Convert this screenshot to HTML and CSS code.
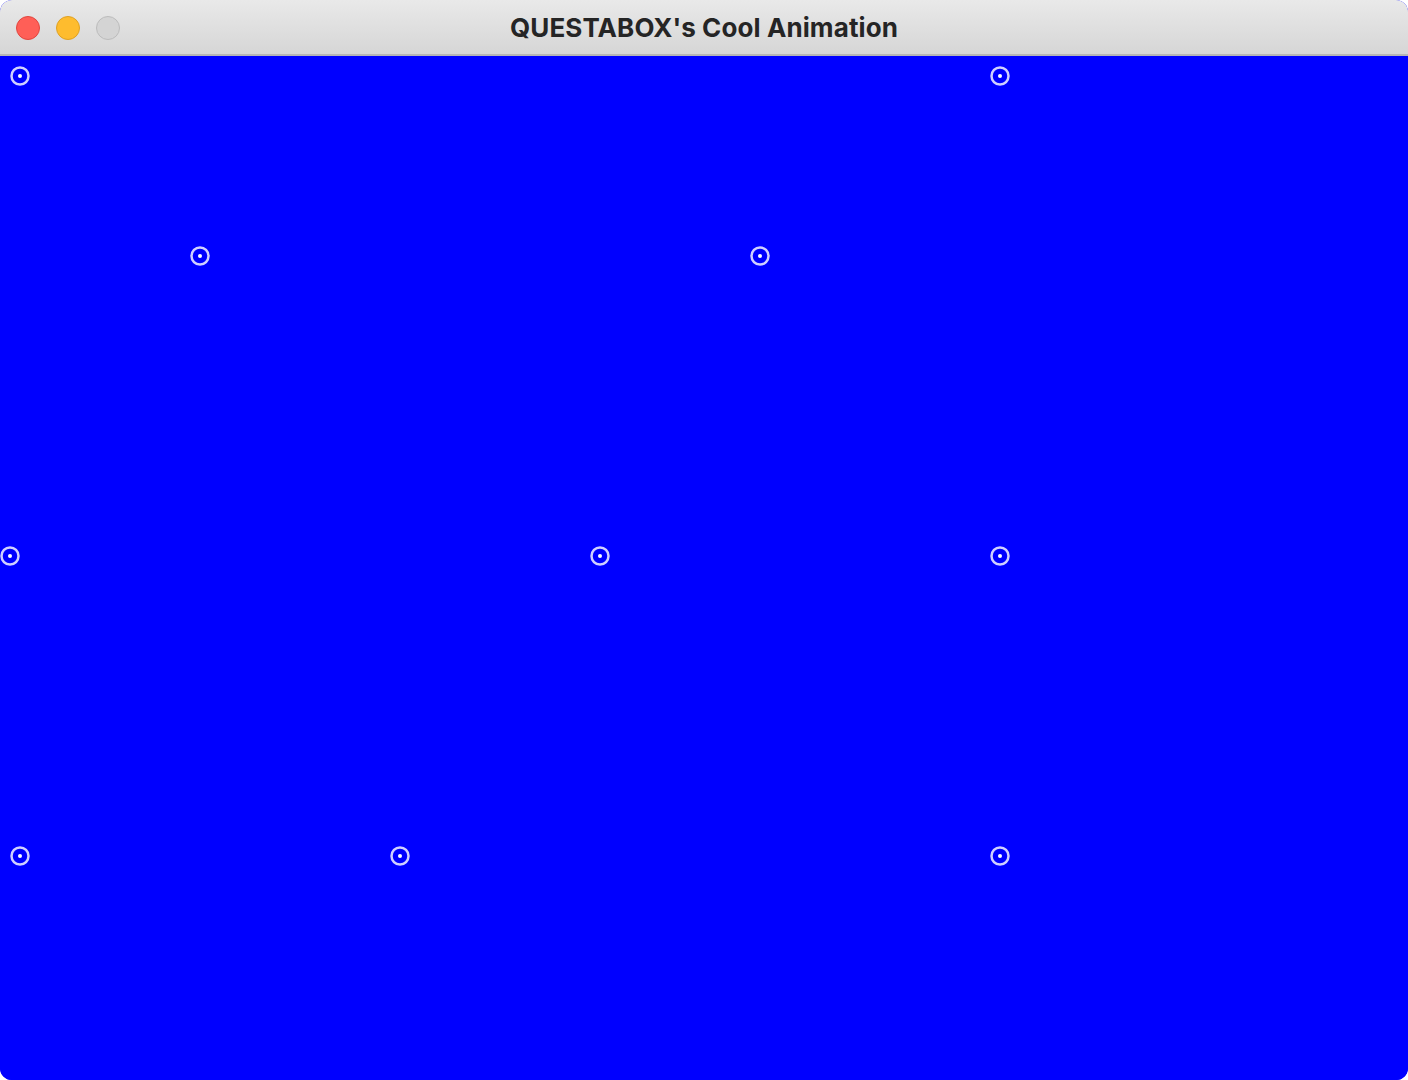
FILE: index.html
```html
<!DOCTYPE html>
<html>
<head>
<meta charset="utf-8">
<title>QUESTABOX's Cool Animation</title>
<link rel="stylesheet" href="styles.css">
</head>
<body>
<div class="window">
  <div class="titlebar">
    <div class="lights">
      <span class="light close"></span>
      <span class="light min"></span>
      <span class="light max"></span>
    </div>
    <div class="title">QUESTABOX's Cool Animation</div>
  </div>
  <div class="canvas">
    <svg class="stage" width="1408" height="1024" viewBox="0 0 1408 1024" xmlns="http://www.w3.org/2000/svg">
      <g class="dot"><circle cx="20" cy="20" r="8.5"/><circle class="c" cx="20" cy="20" r="2"/></g>
      <g class="dot"><circle cx="1000" cy="20" r="8.5"/><circle class="c" cx="1000" cy="20" r="2"/></g>
      <g class="dot"><circle cx="200" cy="200" r="8.5"/><circle class="c" cx="200" cy="200" r="2"/></g>
      <g class="dot"><circle cx="760" cy="200" r="8.5"/><circle class="c" cx="760" cy="200" r="2"/></g>
      <g class="dot"><circle cx="10" cy="500" r="8.5"/><circle class="c" cx="10" cy="500" r="2"/></g>
      <g class="dot"><circle cx="600" cy="500" r="8.5"/><circle class="c" cx="600" cy="500" r="2"/></g>
      <g class="dot"><circle cx="1000" cy="500" r="8.5"/><circle class="c" cx="1000" cy="500" r="2"/></g>
      <g class="dot"><circle cx="20" cy="800" r="8.5"/><circle class="c" cx="20" cy="800" r="2"/></g>
      <g class="dot"><circle cx="400" cy="800" r="8.5"/><circle class="c" cx="400" cy="800" r="2"/></g>
      <g class="dot"><circle cx="1000" cy="800" r="8.5"/><circle class="c" cx="1000" cy="800" r="2"/></g>
    </svg>
  </div>
</div>
</body>
</html>
```

FILE: styles.css
```css
html, body {
  margin: 0;
  padding: 0;
  background: #ffffff;
}

.window {
  width: 1408px;
  height: 1080px;
  border-radius: 12px;
  overflow: hidden;
  display: flex;
  flex-direction: column;
  background: #0000ff;
}

.titlebar {
  position: relative;
  height: 54px;
  flex: 0 0 54px;
  background: linear-gradient(#e9e9e9, #d6d6d6);
  border-bottom: 2px solid #b6b6b6;
  display: flex;
  align-items: center;
  justify-content: center;
}

.lights {
  position: absolute;
  left: 16px;
  top: 16px;
  display: flex;
  gap: 16px;
}

.light {
  width: 22px;
  height: 22px;
  border-radius: 50%;
  border: 1px solid transparent;
}

.close { background: #ff5f57; border-color: #e1463f; }
.min { background: #febc2e; border-color: #dfa123; }
.max { background: #d4d4d4; border-color: #bcbcbc; }

.title {
  font-family: "Inter", "Liberation Sans", sans-serif;
  font-weight: 700;
  font-size: 26px;
  color: #252525;
  letter-spacing: 0.1px;
}

.canvas {
  flex: 1;
  background: #0000ff;
  overflow: hidden;
}

.stage {
  display: block;
}

.dot circle {
  fill: none;
  stroke: #cfcfff;
  stroke-width: 2.5;
}

.dot circle.c {
  fill: #ffffff;
  stroke: none;
}
```
